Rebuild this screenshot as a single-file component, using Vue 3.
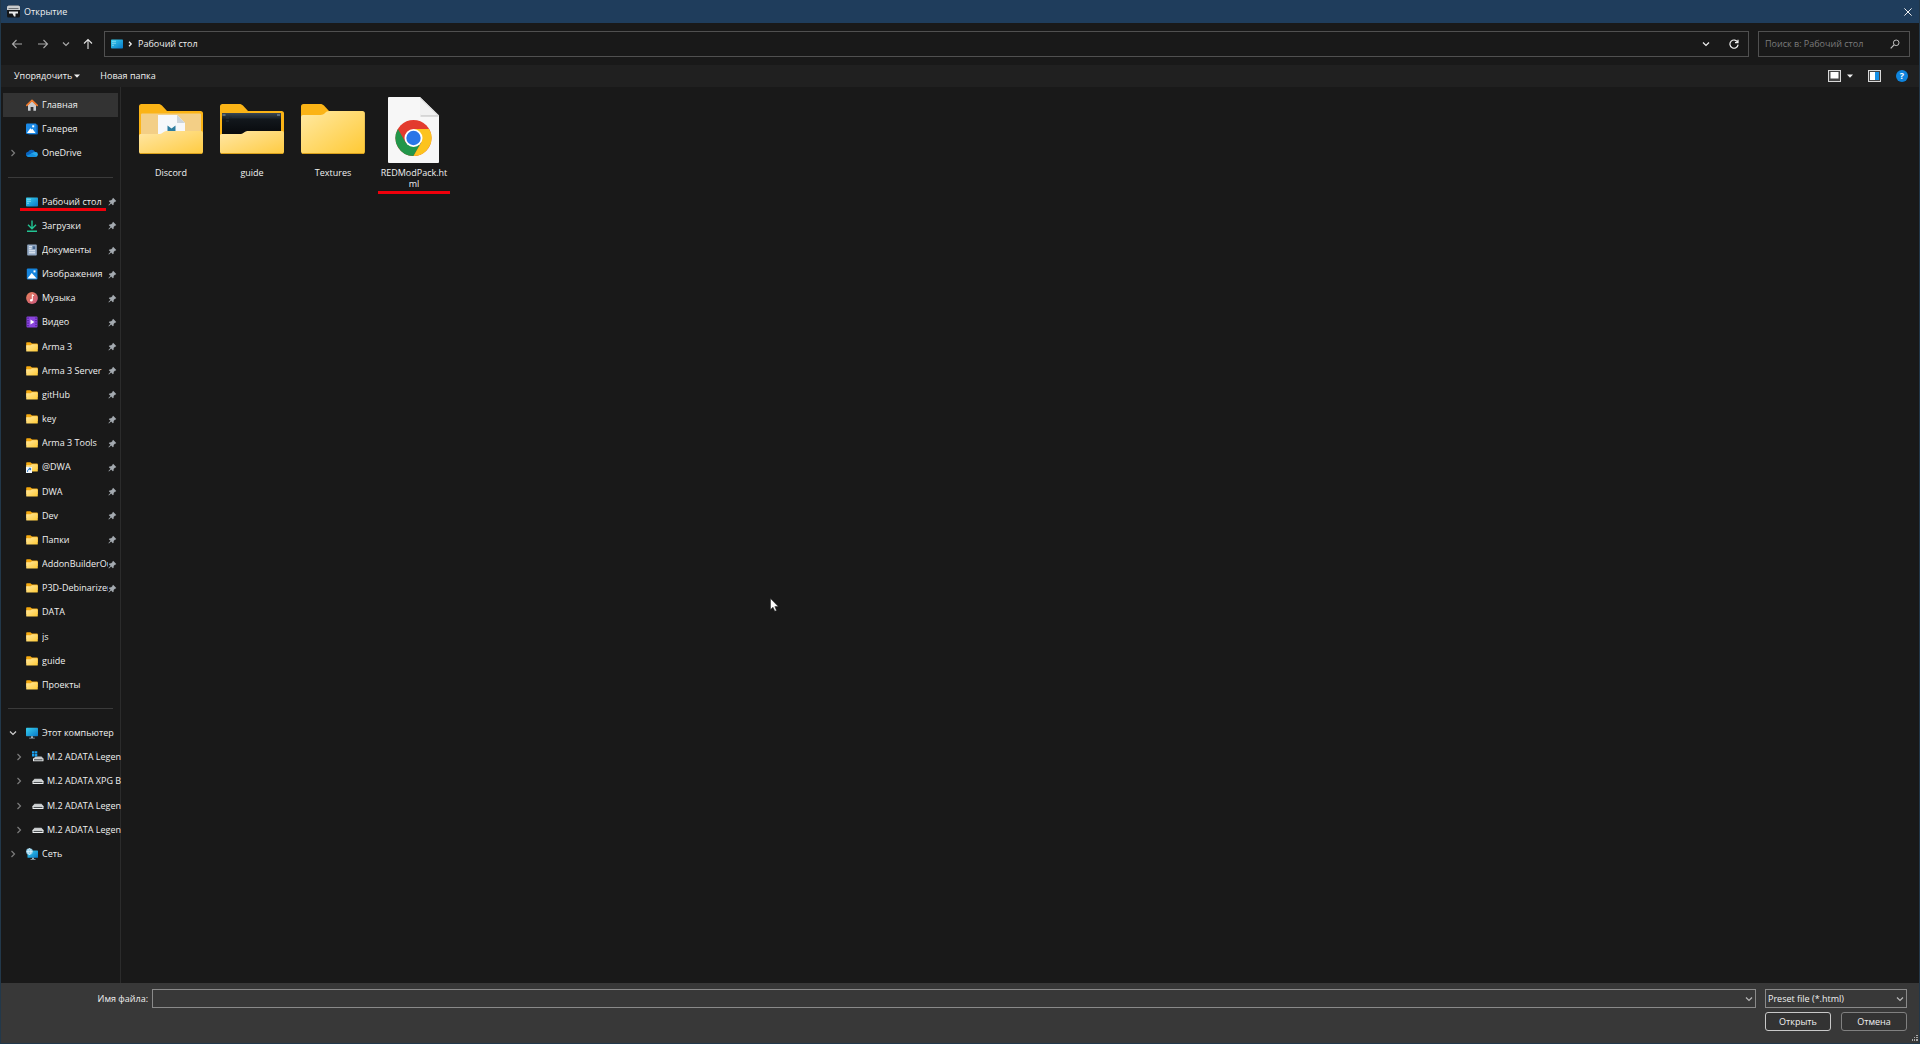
<script setup>
import { ref } from 'vue'

const fileName = ref('')
const query = ref('')
const filter = ref('html')

const tree = [
  { label: 'Главная', icon: 'home', active: true },
  { label: 'Галерея', icon: 'gallery' },
  { label: 'OneDrive', icon: 'cloud', arrow: 'right' },
  { separator: true },
  { label: 'Рабочий стол', icon: 'desktop', pinned: true, marked: true },
  { label: 'Загрузки', icon: 'download', pinned: true },
  { label: 'Документы', icon: 'document', pinned: true },
  { label: 'Изображения', icon: 'picture', pinned: true },
  { label: 'Музыка', icon: 'music', pinned: true },
  { label: 'Видео', icon: 'video', pinned: true },
  { label: 'Arma 3', icon: 'folder', pinned: true },
  { label: 'Arma 3 Server', icon: 'folder', pinned: true },
  { label: 'gitHub', icon: 'folder', pinned: true },
  { label: 'key', icon: 'folder', pinned: true },
  { label: 'Arma 3 Tools', icon: 'folder', pinned: true },
  { label: '@DWA', icon: 'folder-link', pinned: true },
  { label: 'DWA', icon: 'folder', pinned: true },
  { label: 'Dev', icon: 'folder', pinned: true },
  { label: 'Папки', icon: 'folder', pinned: true },
  { label: 'AddonBuilderOu', icon: 'folder', pinned: true },
  { label: 'P3D-Debinarizer', icon: 'folder', pinned: true },
  { label: 'DATA', icon: 'folder' },
  { label: 'js', icon: 'folder' },
  { label: 'guide', icon: 'folder' },
  { label: 'Проекты', icon: 'folder' },
  { separator: true },
  { label: 'Этот компьютер', icon: 'computer', arrow: 'down' },
  { label: 'M.2 ADATA Legen', icon: 'drive-system', arrow: 'right', nested: true },
  { label: 'M.2 ADATA XPG B', icon: 'drive', arrow: 'right', nested: true },
  { label: 'M.2 ADATA Legen', icon: 'drive', arrow: 'right', nested: true },
  { label: 'M.2 ADATA Legen', icon: 'drive', arrow: 'right', nested: true },
  { label: 'Сеть', icon: 'network', arrow: 'right' },
]

const files = [
  { name: 'Discord', icon: 'big-folder-doc' },
  { name: 'guide', icon: 'big-folder-dark' },
  { name: 'Textures', icon: 'big-folder' },
  { name: 'REDModPack.ht\nml', icon: 'big-html', marked: true },
]
</script>

<template>
  <div class="dialog">
    <svg class="sprite" aria-hidden="true">
      <defs>
        <linearGradient id="gFolder" x1="0" y1="0" x2="1" y2="1">
          <stop offset="0" stop-color="#ffe9a3" /><stop offset="1" stop-color="#ffc933" />
        </linearGradient>
        <linearGradient id="gFront" x1="0" y1="0" x2="1" y2="1">
          <stop offset="0" stop-color="#ffe7a6" /><stop offset="1" stop-color="#ffcb40" />
        </linearGradient>
        <linearGradient id="gScreen" x1="0" y1="0" x2="1" y2="1">
          <stop offset="0" stop-color="#38d0ee" /><stop offset="1" stop-color="#0878c8" />
        </linearGradient>
        <linearGradient id="gMusic" x1="0" y1="0" x2="1" y2="1">
          <stop offset="0" stop-color="#e8825a" /><stop offset="1" stop-color="#c9557e" />
        </linearGradient>
        <linearGradient id="gDark" x1="0" y1="0" x2="0" y2="1">
          <stop offset="0" stop-color="#3a4854" /><stop offset="0.3" stop-color="#12171c" /><stop offset="1" stop-color="#07090c" />
        </linearGradient>
      </defs>

      <symbol id="home" viewBox="0 0 12 12">
        <path d="M2 5.500 6 1.800l4 3.700V11.300a.5.5 0 0 1-.5.5H7.400V8H4.600v3.800H2.500a.5.5 0 0 1-.5-.5z" fill="#c9cbce" />
        <path d="M.8 6.400 6 1.300l5.200 5.100" fill="none" stroke="#f07a2c" stroke-width="1.700" stroke-linecap="round" stroke-linejoin="round" />
      </symbol>
      <symbol id="gallery" viewBox="0 0 12 12">
        <rect x="2" y="1.500" width="10" height="10" rx="1.200" fill="#0a5cae" />
        <rect x="0" y=".5" width="10.500" height="10.500" rx="1.200" fill="#1c8ae6" />
        <path d="M1 10 4.300 5.300 5.500 6.500 6.400 5.700 9.500 10z" fill="#fff" />
        <rect x="6.200" y="2.300" width="2" height="2" fill="#fff" />
      </symbol>
      <symbol id="picture" viewBox="0 0 12 12">
        <rect x=".8" y=".6" width="10.700" height="11" rx="1" fill="#1584dd" />
        <path d="M1.500 10.600 5.700 5l5 5.600z" fill="#fff" />
        <rect x="7.500" y="2.400" width="2" height="2" fill="#fff" />
      </symbol>
      <symbol id="cloud" viewBox="0 0 12 12">
        <path d="M2.500 9.800a2.500 2.500 0 0 1-.3-5A3.800 3.800 0 0 1 9 4.700a2.600 2.600 0 0 1 .5 5.100z" fill="#0a63bd" />
        <path d="M2.600 9.800C4 7 7 5 9.500 5a2.400 2.400 0 0 1 0 4.800z" fill="#28a8ea" />
        <path d="M.4 8.500 6 6.600 11 9.200 9.500 9.900h-7A2.300 2.300 0 0 1 .4 8.500z" fill="#1490df" />
      </symbol>
      <symbol id="desktop" viewBox="0 0 12 12">
        <rect x="0" y="1.500" width="12" height="9" rx=".8" fill="url(#gScreen)" />
        <path d="M1.500 3.300h1M3.500 3.300h1M1.500 5.300h1M3.500 5.300h1M1.500 7.300h1" stroke="#c9f6ff" stroke-width="1" />
      </symbol>
      <symbol id="download" viewBox="0 0 12 12">
        <path d="M6 .5v8M2 4.800 6 8.700l4-3.900M1 11.300h10" fill="none" stroke="#22c493" stroke-width="1.400" />
      </symbol>
      <symbol id="document" viewBox="0 0 12 12">
        <path d="M2 .5h8a.8.8 0 0 1 .8.8v9.400a.8.8 0 0 1-.8.8H2a.8.8 0 0 1-.8-.8V1.300A.8.8 0 0 1 2 .5z" fill="#93a9c4" />
        <path d="M3 2.800h3M3 4.800h2.500M3 6.800h6M3 8.800h6" stroke="#eef4fb" stroke-width="1" />
        <rect x="6.700" y="2.300" width="2.500" height="2.700" fill="#44648c" />
      </symbol>
      <symbol id="music" viewBox="0 0 12 12">
        <circle cx="6" cy="6" r="5.900" fill="url(#gMusic)" />
        <path d="M6.300 8.200V2.700l1.700 1" fill="none" stroke="#fff" stroke-width="1" />
        <circle cx="5.300" cy="8.200" r="1.300" fill="#fff" />
      </symbol>
      <symbol id="video" viewBox="0 0 12 12">
        <rect x=".5" y=".5" width="11" height="11" rx="1" fill="#8a44dc" />
        <path d="M2 1.500v10M10 1.500v10" stroke="#42178a" stroke-width="1.200" stroke-dasharray="1.300 1.200" />
        <path d="M4.500 3.600 8.400 6 4.500 8.400z" fill="#fff" />
      </symbol>
      <symbol id="folder" viewBox="0 0 12 12">
        <path d="M.2 2a.7.7 0 0 1 .7-.7h3.500L6 2.600h5a.8.8 0 0 1 .8.8V8H.2z" fill="#f5a90f" />
        <path d="M.2 4.200h4.500L6 3.200h5.100a.7.7 0 0 1 .7.700v6a.7.7 0 0 1-.7.700H.9a.7.7 0 0 1-.7-.7z" fill="url(#gFolder)" />
      </symbol>
      <symbol id="folder-link" viewBox="0 0 12 12">
        <use href="#folder" />
        <rect x="0" y="6" width="6" height="6" fill="#f4f8fc" />
        <path d="M1.500 10.800c0-2 1-2.700 2.700-2.700M2.800 7.300h1.800v1.900" fill="none" stroke="#1b6fc4" stroke-width="1" />
      </symbol>
      <symbol id="computer" viewBox="0 0 12 12">
        <rect x="0" y=".8" width="12" height="8.500" rx=".7" fill="url(#gScreen)" />
        <path d="M5 9.300h2v1.400h1.800v.9H3.200v-.9H5z" fill="#9fb1bd" />
      </symbol>
      <symbol id="drive" viewBox="0 0 12 12">
        <path d="M2.500 3.800h7L11.300 6H.7z" fill="#c4c7c9" />
        <rect x=".5" y="5.800" width="11" height="3.200" rx=".5" fill="#eceeef" />
        <rect x="1.500" y="6.800" width="9" height="1.200" fill="#4c5053" />
      </symbol>
      <symbol id="drive-system" viewBox="0 0 12 12">
        <path d="M3.500 5.500h6L11.300 7.500H1.500z" fill="#c4c7c9" />
        <rect x="1" y="7.300" width="10.500" height="3" rx=".5" fill="#eceeef" />
        <rect x="2" y="8.200" width="8.500" height="1.200" fill="#4c5053" />
        <path d="M0 .3h2.400v2.300H0zM2.900.3h2.400v2.300H2.900zM0 3.100h2.400v2.300H0zM2.900 3.100h2.400v2.300H2.900z" fill="#1aa0ee" />
      </symbol>
      <symbol id="network" viewBox="0 0 12 12">
        <rect x="1.500" y="2.500" width="10.500" height="7.300" rx=".6" fill="url(#gScreen)" />
        <path d="M6 9.800h2v1.200h1.500v.7h-5V11H6z" fill="#9fb1bd" />
        <circle cx="3.500" cy="3.600" r="3.300" fill="#8ccdea" />
        <path d="M.5 3.600h6M3.500.4c-2 2-2 4.400 0 6.400 2-2 2-4.400 0-6.400" fill="none" stroke="#e8f7fd" stroke-width=".7" />
      </symbol>
      <symbol id="pin" viewBox="0 0 10 10">
        <path d="M5.600.9 9.200 4.400 8.300 5.200 7.900 5.100 6.300 6.800 6.200 8.500 5.400 9.100 3.500 7.200 1 9.500.5 9 2.800 6.400.9 4.600 1.600 3.800 3.500 3.700 5.100 2.100 5 1.600z" fill="#a4aab0" />
      </symbol>
      <symbol id="chev-down" viewBox="0 0 8 8">
        <path d="M1 2.500 4 5.500l3-3" fill="none" stroke="currentColor" stroke-width="1.200" />
      </symbol>
      <symbol id="chev-right" viewBox="0 0 8 8">
        <path d="M2.500 1 5.500 4l-3 3" fill="none" stroke="currentColor" stroke-width="1.200" />
      </symbol>
      <symbol id="chev-small" viewBox="0 0 8 8">
        <path d="M3 1.800 5.200 4 3 6.200" fill="none" stroke="currentColor" stroke-width="1.300" />
      </symbol>
      <symbol id="caret" viewBox="0 0 6 4"><path d="M0 .5h6L3 3.700z" fill="currentColor" /></symbol>

      <symbol id="big-folder" viewBox="0 0 64 66">
        <path d="M0 9.500A2.500 2.500 0 0 1 2.500 7H19c2 0 3 .5 4.200 1.700L28 14v7H0z" fill="#fbb416" />
        <path d="M0 20a2 2 0 0 1 2-2h17.500c2 0 3-.5 4.300-1.700 1.400-1.400 2.600-2.300 4.600-2.300h33a2.500 2.500 0 0 1 2.500 2.500v38a2.500 2.500 0 0 1-2.500 2.500h-59A2.500 2.500 0 0 1 0 54.500z" fill="url(#gFolder)" />
        <path d="M1 56.500h62" stroke="#d9a01c" stroke-width="1" />
      </symbol>
      <symbol id="big-folder-doc" viewBox="0 1 64 66">
        <path d="M0 10.500A2.500 2.500 0 0 1 2.500 8H19c2 0 3 .5 4.200 1.700L28 15h33.500a2.500 2.500 0 0 1 2.500 2.500V40H0z" fill="#fbb416" />
        <rect x="2" y="17.500" width="60" height="22" rx="1" fill="#f3cf86" />
        <path d="M19 19h19l8 8v12H19z" fill="#f6f8fa" />
        <path d="M38 19l8 8h-8z" fill="#ccd5db" />
        <path d="M28.500 29.500l4 3 4-3v7h-8z" fill="#2d7d9f" />
        <path d="M0 39.500a1.500 1.500 0 0 1 1.500-1.500h18c2 0 3-.4 4.500-1.500s3-1.500 5-1.500h33a2 2 0 0 1 2 2v18.500a2.500 2.500 0 0 1-2.500 2.500h-59A2.500 2.500 0 0 1 0 55.500z" fill="url(#gFront)" />
        <path d="M1 57.500h62" stroke="#d9a01c" stroke-width="1" />
      </symbol>
      <symbol id="big-folder-dark" viewBox="0 1 64 66">
        <path d="M0 10.500A2.500 2.500 0 0 1 2.500 8H19c2 0 3 .5 4.200 1.700L28 15h33.500a2.500 2.500 0 0 1 2.500 2.500V40H0z" fill="#fbb416" />
        <rect x="2" y="17" width="59" height="22" fill="url(#gDark)" />
        <path d="M2.500 19h3M57 19h3" stroke="#8fa0ae" stroke-width="1" />
        <path d="M6 22h3M6 25h3M12 21h38" stroke="#26313b" stroke-width="1" />
        <path d="M0 39.500a1.500 1.500 0 0 1 1.500-1.500h18c2 0 3-.4 4.500-1.500s3-1.500 5-1.500h33a2 2 0 0 1 2 2v18.500a2.500 2.500 0 0 1-2.500 2.500h-59A2.500 2.500 0 0 1 0 55.500z" fill="url(#gFront)" />
        <path d="M1 57.500h62" stroke="#d9a01c" stroke-width="1" />
      </symbol>
      <symbol id="big-html" viewBox="0 0 64 66">
        <path d="M7 0h31l19 18.500V65a1 1 0 0 1-1 1H7a1 1 0 0 1-1-1V1a1 1 0 0 1 1-1z" fill="#f7f7f7" />
        <path d="M38 0l19 18.500H40a2 2 0 0 1-2-2z" fill="#dadada" />
        <path d="M38 1.500 55.500 18.500H40a2 2 0 0 1-2-2z" fill="#f1f1f1" />
        <path d="M38.500 19h18" stroke="#bdbdbd" stroke-width="1" />
        <circle cx="31.500" cy="41" r="18" fill="#e33b2e" />
        <path d="M15.900 32 23.700 45.500 31.500 50 39.300 45.500 31.500 59A18 18 0 0 1 15.900 32z" fill="#22964a" />
        <path d="M31.500 32h15.600A18 18 0 0 1 31.500 59l7.800-13.500z" fill="#fcc31e" />
        <circle cx="31.500" cy="41" r="9" fill="#fff" />
        <circle cx="31.500" cy="41" r="7.200" fill="#2a76e8" />
      </symbol>
    </svg>

    <header class="titlebar">
      <svg class="app-icon" viewBox="0 0 13 13" aria-hidden="true">
        <rect x="0" y=".5" width="13" height="12" rx="1.500" fill="#14171a" />
        <path d="M0 1.500 1.500.5h10L13 1.500v3.500H0z" fill="#c8cccf" />
        <path d="M1.500 3.500h10" stroke="#6d7276" stroke-width="1" />
        <path d="M2 6.500h9v2H8.500v3H7L5.500 8.500H2z" fill="#e9ebec" />
      </svg>
      <h1>Открытие</h1>
      <button class="close" type="button" aria-label="Закрыть">
        <svg viewBox="0 0 8 8"><path d="M.4.4l7.200 7.200M7.600.4.4 7.600" stroke="currentColor" stroke-width="1" /></svg>
      </button>
    </header>

    <div class="navbar">
      <div class="history">
        <button type="button" aria-label="Назад">
          <svg viewBox="0 0 12 12"><path d="M11 6H1.500M5.500 2l-4 4 4 4" fill="none" stroke="#a9a9a9" stroke-width="1.100" /></svg>
        </button>
        <button type="button" aria-label="Вперёд">
          <svg viewBox="0 0 12 12"><path d="M1 6h9.500M6.500 2l4 4-4 4" fill="none" stroke="#a9a9a9" stroke-width="1.100" /></svg>
        </button>
        <button class="small" type="button" aria-label="Последние расположения"><svg><use href="#chev-down" /></svg></button>
        <button type="button" aria-label="Вверх">
          <svg viewBox="0 0 12 12"><path d="M6 11V1.500M2 5.500l4-4 4 4" fill="none" stroke="#e4e4e4" stroke-width="1.100" /></svg>
        </button>
      </div>
      <div class="address">
        <svg class="icon"><use href="#desktop" /></svg>
        <svg class="chev"><use href="#chev-small" /></svg>
        <a href="#">Рабочий стол</a>
        <button class="address-drop" type="button" aria-label="Предыдущие расположения"><svg class="chev"><use href="#chev-down" /></svg></button>
        <button class="refresh" type="button" aria-label="Обновить">
          <svg viewBox="0 0 10 10"><path d="M8.800 3.500A4.100 4.100 0 1 0 9.100 5.600M9 .7v3H6" fill="none" stroke="currentColor" stroke-width="1.200" /></svg>
        </button>
      </div>
      <label class="search">
        <input v-model="query" type="text" placeholder="Поиск в: Рабочий стол" aria-label="Поиск" />
        <svg viewBox="0 0 10 10" aria-hidden="true"><circle cx="6.200" cy="3.800" r="2.800" fill="none" stroke="currentColor" /><path d="M4.100 5.900.7 9.300" stroke="currentColor" stroke-width="1.200" /></svg>
      </label>
    </div>

    <div class="toolbar">
      <button type="button">Упорядочить<svg class="caret"><use href="#caret" /></svg></button>
      <button type="button">Новая папка</button>
      <div class="view-tools">
        <button type="button" aria-label="Вид">
          <svg class="tool" viewBox="0 0 13 12"><rect x=".5" y=".5" width="12" height="11" fill="#444" stroke="#d8d8d8" /><rect x="2.500" y="2" width="8" height="6.500" fill="#fff" /></svg>
          <svg class="caret"><use href="#caret" /></svg>
        </button>
        <button type="button" aria-label="Область просмотра">
          <svg class="tool" viewBox="0 0 13 12"><rect x=".5" y=".5" width="12" height="11" fill="#444" stroke="#d8d8d8" /><rect x="2" y="2" width="5" height="8" fill="#fff" /><rect x="7" y="2" width="4" height="8" fill="#1690e6" /></svg>
        </button>
        <button class="help" type="button" aria-label="Справка">?</button>
      </div>
    </div>

    <div class="body">
      <nav class="sidebar" aria-label="Папки">
        <template v-for="(item, i) in tree" :key="i">
          <div v-if="item.separator" class="separator"></div>
          <a v-else href="#" class="row" :class="{ active: item.active, nested: item.nested, marked: item.marked }">
            <span class="arrow" :class="item.arrow"><svg v-if="item.arrow"><use :href="'#chev-' + item.arrow" /></svg></span>
            <svg class="icon"><use :href="'#' + item.icon" /></svg>
            <span class="label">{{ item.label }}</span>
            <svg v-if="item.pinned" class="pin"><use href="#pin" /></svg>
          </a>
        </template>
      </nav>
      <main class="files">
        <a v-for="file in files" :key="file.name" href="#" class="file" :class="{ marked: file.marked }">
          <svg><use :href="'#' + file.icon" /></svg>
          <span>{{ file.name }}</span>
        </a>
      </main>
    </div>

    <footer class="footer">
      <label for="file-name">Имя файла:</label>
      <div class="combo">
        <input id="file-name" v-model="fileName" type="text" />
        <svg class="chev"><use href="#chev-down" /></svg>
      </div>
      <div class="actions">
        <div class="combo">
          <select v-model="filter" aria-label="Тип файлов">
            <option value="html">Preset file (*.html)</option>
          </select>
          <svg class="chev"><use href="#chev-down" /></svg>
        </div>
        <div class="buttons">
          <button class="primary" type="button">Открыть</button>
          <button type="button">Отмена</button>
        </div>
      </div>
      <svg class="grip" viewBox="0 0 6 6" aria-hidden="true"><path d="M4 0h2v1H4zM2 2h1v1H2zM4 2h2v1H4zM0 4h1v2H0zM2 4h1v2H2zM4 4h2v2H4z" fill="#a9a9a9" /></svg>
    </footer>

    <svg class="cursor" viewBox="0 0 9 14" aria-hidden="true"><path d="M.5.5v11L3 9.200l1.800 4 1.700-.8L4.800 8.600H8.300z" fill="#fff" stroke="#222" stroke-width=".5" /></svg>
  </div>
</template>

<style>
body {
  margin: 0;
  background: #191919;
}
</style>

<style scoped>
.dialog {
  position: relative;
  display: flex;
  flex-direction: column;
  box-sizing: border-box;
  min-height: 100vh;
  border: 1px solid #22384a;
  border-top: 0;
  background: #191919;
  color: #f0f0f0;
  font: 9px/12px "Open Sans", "Noto Sans", sans-serif;
}

.sprite {
  position: absolute;
  width: 0;
  height: 0;
}

a {
  color: inherit;
  text-decoration: none;
}

button,
input,
select {
  box-sizing: border-box;
  margin: 0;
  padding: 0;
  border: 0;
  background: none;
  color: inherit;
  font: inherit;
}

button {
  display: flex;
  align-items: center;
  justify-content: center;
}

svg {
  display: block;
  flex: none;
}

.icon {
  width: 12px;
  height: 12px;
}

.chev {
  width: 8px;
  height: 8px;
}

.caret {
  width: 6px;
  height: 4px;
}

.titlebar {
  display: flex;
  align-items: center;
  height: 23px;
  padding: 0 5px 0 6px;
  background: #1f3d5c;
}

.app-icon {
  width: 13px;
  height: 13px;
}

.titlebar h1 {
  margin: 0 0 0 4px;
  font-size: 9px;
  font-weight: 400;
}

.close {
  width: 12px;
  height: 12px;
  margin-left: auto;
}

.close svg {
  width: 8px;
  height: 8px;
}

.navbar {
  display: flex;
  align-items: center;
  height: 42px;
  padding: 0 9px 0 10px;
}

.history {
  display: flex;
  align-items: center;
  gap: 14px;
  width: 93px;
}

.history svg {
  width: 12px;
  height: 12px;
}

.history .small {
  margin: 0 -2px 0 -1px;
  color: #a9a9a9;
}

.history .small svg {
  width: 8px;
  height: 8px;
}

.address,
.search {
  display: flex;
  align-items: center;
  box-sizing: border-box;
  height: 26px;
  border: 1px solid #505050;
}

.address {
  flex: 1;
  padding: 0 9px 0 6px;
}

.address a {
  margin-left: 4px;
}

.address > .chev {
  margin-left: 3px;
}

.address-drop {
  margin-left: auto;
}

.refresh {
  margin-left: 19px;
}

.refresh svg,
.search svg {
  width: 10px;
  height: 10px;
}

.search {
  width: 152px;
  margin-left: 9px;
  padding: 0 9px 0 6px;
  color: #c0c0c0;
}

.search input {
  flex: 1;
  min-width: 0;
  outline: 0;
}

.search input::placeholder {
  color: #7c7c7c;
  opacity: 1;
}

.toolbar {
  display: flex;
  align-items: center;
  gap: 20px;
  height: 22px;
  padding: 0 11px 0 13px;
  background: #202020;
}

.toolbar .caret {
  margin-left: 2px;
}

.toolbar .view-tools .caret {
  margin-left: 6px;
}

.view-tools {
  display: flex;
  align-items: center;
  gap: 15px;
  margin-left: auto;
}

.tool {
  width: 13px;
  height: 12px;
}

.help {
  width: 12px;
  height: 12px;
  border-radius: 50%;
  background: #0f84dc;
  color: #fff;
  font-weight: 700;
}

.body {
  display: flex;
  flex: 1;
}

.sidebar {
  display: grid;
  grid-auto-rows: 1fr;
  box-sizing: border-box;
  width: 119px;
  height: 779px;
  padding: 6px 2px 0;
}

.row {
  position: relative;
  display: flex;
  align-items: center;
  min-width: 0;
}

.row.active {
  background: #333;
}

.arrow {
  width: 23px;
  color: #7c7c7c;
}

.arrow svg {
  width: 8px;
  height: 8px;
  margin-left: 6px;
}

.arrow.down {
  color: #d0d0d0;
}

.nested .arrow {
  width: 29px;
}

.nested .arrow svg {
  margin-left: 12px;
}

.label {
  flex: 1;
  min-width: 0;
  margin-left: 4px;
  overflow: hidden;
  white-space: nowrap;
}

.nested .label {
  margin-left: 3px;
  overflow: visible;
}

.pin {
  width: 9px;
  height: 9px;
  margin-right: 1px;
}

.row.marked::after {
  content: "";
  position: absolute;
  left: 17px;
  bottom: 3px;
  width: 86px;
  height: 3px;
  background: #f0000b;
}

.separator {
  align-self: center;
  height: 1px;
  margin: 0 5px;
  background: #3a3a3a;
}

.files {
  display: flex;
  flex: 1;
  align-items: flex-start;
  align-content: flex-start;
  flex-wrap: wrap;
  gap: 9px;
  padding: 10px 14px;
  border-left: 1px solid #2b2b2b;
}

.file {
  position: relative;
  width: 72px;
  padding-bottom: 5px;
  line-height: 11px;
  text-align: center;
  white-space: pre-line;
}

.file svg {
  width: 64px;
  height: 66px;
  margin: 0 auto 4px;
}

.file.marked::after {
  content: "";
  position: absolute;
  right: 0;
  bottom: 0;
  left: 0;
  height: 3px;
  background: #f0000b;
}

.footer {
  position: relative;
  display: flex;
  align-items: flex-start;
  box-sizing: border-box;
  height: 60px;
  padding: 6px 12px 0 0;
  background: #383838;
}

.footer > label {
  width: 147px;
  margin-right: 1px;
  line-height: 19px;
  text-align: right;
}

.combo {
  position: relative;
  display: flex;
  flex: 1;
}

.footer > .combo {
  margin: 0 9px 0 3px;
}

.combo input,
.combo select {
  width: 100%;
  height: 19px;
  padding: 0 20px 0 2px;
  border: 1px solid #8a8a8a;
  appearance: none;
}

.combo .chev {
  position: absolute;
  top: 6px;
  right: 3px;
  color: #b8b8b8;
  pointer-events: none;
}

.actions {
  width: 142px;
}

.buttons {
  display: flex;
  gap: 10px;
  margin-top: 4px;
}

.buttons button {
  flex: 1;
  height: 19px;
  border: 1px solid #808080;
  border-radius: 3px;
  background: #333;
}

.buttons .primary {
  border-color: #c8c8c8;
}

.grip {
  position: absolute;
  right: 1px;
  bottom: 2px;
  width: 6px;
  height: 6px;
}

.cursor {
  position: absolute;
  top: 598px;
  left: 769px;
  width: 9px;
  height: 14px;
  pointer-events: none;
}
</style>
